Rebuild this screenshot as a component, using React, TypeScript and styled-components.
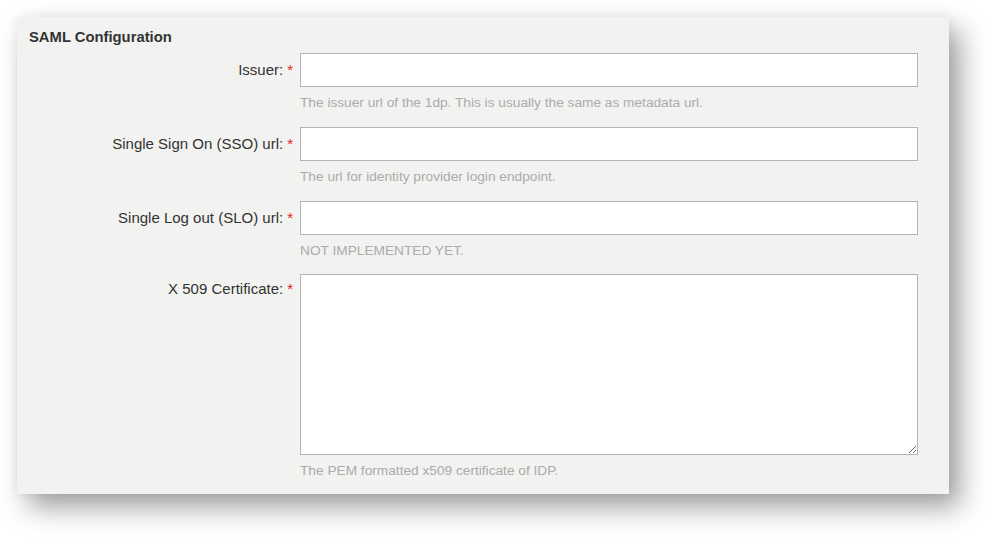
import React from 'react';
import styled, { createGlobalStyle } from 'styled-components';

const GlobalStyle = createGlobalStyle`
  html, body {
    margin: 0;
    padding: 0;
    background: #ffffff;
  }
  body {
    font-family: "Liberation Sans", Arial, sans-serif;
    color: #333333;
  }
`;

const Page = styled.div`
  padding: 17px 48px 49px 17px;
`;

const Panel = styled.section`
  width: 932px;
  box-sizing: border-box;
  background: #f2f2f0;
  padding: 11px 31px 14px 12px;
  box-shadow: 11px 13px 26px rgba(0, 0, 0, 0.38), 0 0 10px rgba(0, 0, 0, 0.06);
`;

const Title = styled.h3`
  margin: 0 0 7px;
  font-size: 14.8px;
  line-height: 18px;
  font-weight: bold;
  color: #333333;
`;

const Form = styled.div`
  display: grid;
  grid-template-columns: 264px 1fr;
  column-gap: 7px;
`;

const Label = styled.label<{ $tall?: boolean }>`
  font-size: 15px;
  line-height: 18px;
  color: #333333;
  text-align: right;
  padding-top: ${p => (p.$tall ? '6px' : '8px')};
`;

const Required = styled.span`
  color: #e02020;
  margin-left: 4px;
`;

const Field = styled.div<{ $gap: number }>`
  display: flex;
  flex-direction: column;
  margin-bottom: ${p => p.$gap}px;
`;

const TextInput = styled.input`
  box-sizing: border-box;
  width: 100%;
  height: 34px;
  border: 1px solid #b4b4b4;
  background: #ffffff;
  padding: 6px 8px;
  font-family: inherit;
  font-size: 14px;
  outline: none;
`;

const TextArea = styled.textarea`
  box-sizing: border-box;
  width: 100%;
  height: 181px;
  border: 1px solid #b4b4b4;
  background: #ffffff;
  padding: 6px 8px;
  font-family: inherit;
  font-size: 14px;
  outline: none;
  resize: vertical;
  display: block;
`;

const Hint = styled.div`
  margin-top: 7px;
  font-size: 13.7px;
  line-height: 18px;
  color: #ababab;
`;

const fields = [
  { id: 'issuer', label: 'Issuer:', hint: 'The issuer url of the 1dp. This is usually the same as metadata url.', gap: 15 },
  { id: 'sso', label: 'Single Sign On (SSO) url:', hint: 'The url for identity provider login endpoint.', gap: 15 },
  { id: 'slo', label: 'Single Log out (SLO) url:', hint: 'NOT IMPLEMENTED YET.', gap: 14 },
];

const App: React.FC = () => (
  <>
    <GlobalStyle />
    <Page>
      <Panel>
        <Title>SAML Configuration</Title>
        <Form>
          {fields.map(f => (
            <React.Fragment key={f.id}>
              <Label htmlFor={f.id}>
                {f.label}
                <Required>*</Required>
              </Label>
              <Field $gap={f.gap}>
                <TextInput id={f.id} type="text" />
                <Hint>{f.hint}</Hint>
              </Field>
            </React.Fragment>
          ))}
          <Label htmlFor="cert" $tall>
            X 509 Certificate:
            <Required>*</Required>
          </Label>
          <Field $gap={0}>
            <TextArea id="cert" />
            <Hint>The PEM formatted x509 certificate of IDP.</Hint>
          </Field>
        </Form>
      </Panel>
    </Page>
  </>
);

export default App;
